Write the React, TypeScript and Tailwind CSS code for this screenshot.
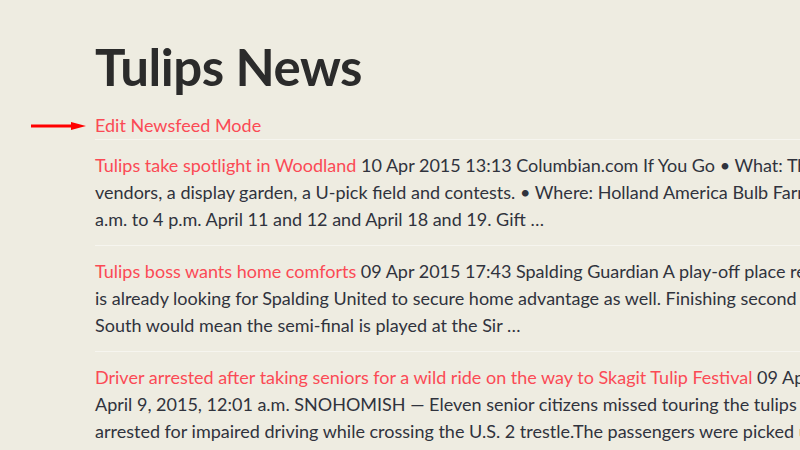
import { useState } from "react";

const news = [
  {
    title: "Tulips take spotlight in Woodland",
    lines: [
      "10 Apr 2015 13:13 Columbian.com If You Go • What: The Woodland Tulip Festival, with food",
      "vendors, a display garden, a U-pick field and contests. • Where: Holland America Bulb Farms, 1066 S. Pekin Road.",
      "a.m. to 4 p.m. April 11 and 12 and April 18 and 19. Gift …",
    ],
  },
  {
    title: "Tulips boss wants home comforts",
    lines: [
      "09 Apr 2015 17:43 Spalding Guardian A play-off place remains the target, but the Tulips boss",
      "is already looking for Spalding United to secure home advantage as well. Finishing second or third",
      "South would mean the semi-final is played at the Sir …",
    ],
  },
  {
    title: "Driver arrested after taking seniors for a wild ride on the way to Skagit Tulip Festival",
    lines: [
      "09 Apr 2015 12:01 HeraldNet",
      "April 9, 2015, 12:01 a.m. SNOHOMISH — Eleven senior citizens missed touring the tulips on Wednesday after their driver was",
      "arrested for impaired driving while crossing the U.S. 2 trestle.The passengers were picked up by",
    ],
  },
];

export default function App() {
  const [editMode, setEditMode] = useState(false);

  return (
    <div
      className="min-h-screen w-full overflow-hidden bg-[#eeece1] text-[#30333d]"
      style={{ fontFamily: "Lato, 'Noto Sans', sans-serif" }}
    >
      <div className="pl-[95px] pt-[36px]">
        <h1 className="text-[51px] font-bold leading-[1.2] tracking-[-0.5px] text-[#2b2b2b]">
          Tulips News
        </h1>

        <div className="relative mt-[15px] w-[1000px] border-b border-[#f6f5ef]">
          <svg
            className="absolute left-[-64px] top-[9px]"
            width="56"
            height="10"
            viewBox="0 0 56 10"
          >
            <rect x="0" y="3.5" width="44" height="3" fill="#ff0000" />
            <polygon points="40,1 55,5 40,9" fill="#ff0000" />
          </svg>
          <button
            onClick={() => setEditMode(!editMode)}
            className="text-[18px] leading-[27px] text-[#fb4a55]"
          >
            Edit Newsfeed Mode
          </button>
        </div>

        <ul className="w-[1100px]">
          {news.map((item) => (
            <li
              key={item.title}
              className="border-b border-[#f6f5ef] py-[12px] text-[18px] leading-[27px] whitespace-nowrap"
            >
              <a href="#" className="text-[#fb4a55]">
                {item.title}
              </a>{" "}
              {item.lines.map((line, i) => (
                <span key={i}>
                  {line}
                  {i < item.lines.length - 1 && <br />}
                </span>
              ))}
            </li>
          ))}
        </ul>
      </div>
    </div>
  );
}
